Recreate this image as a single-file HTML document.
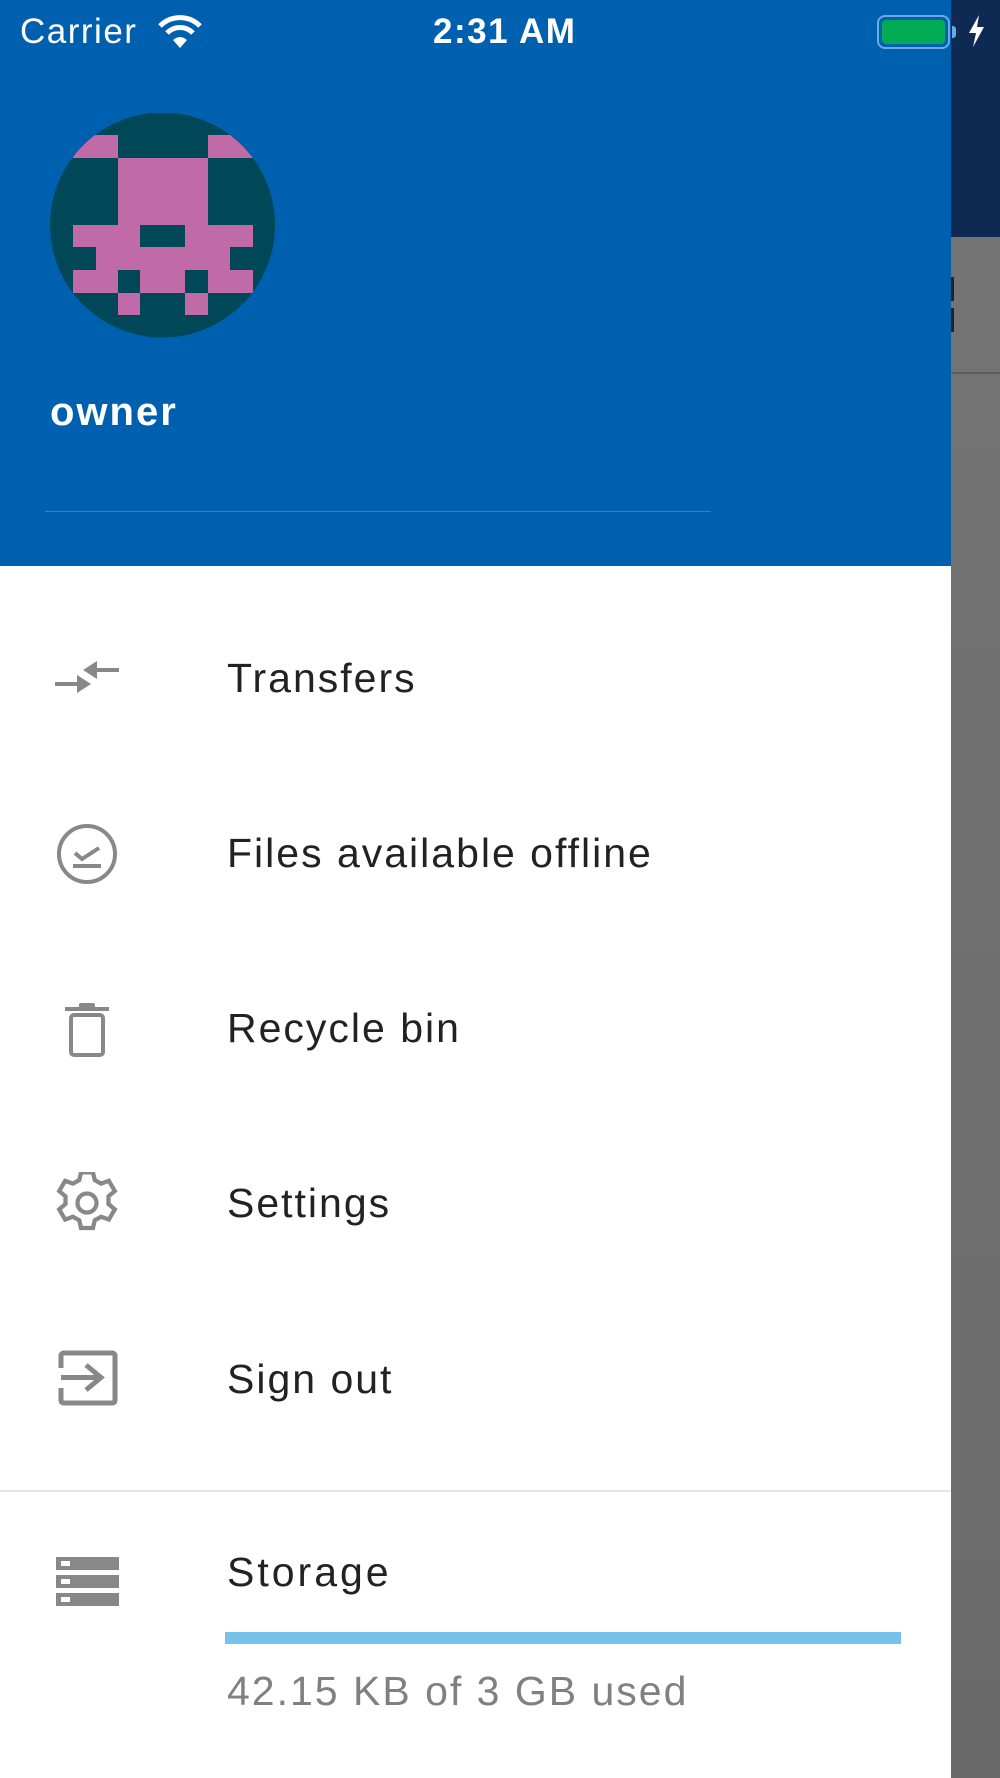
<!DOCTYPE html>
<html><head><meta charset="utf-8"><style>
*{margin:0;padding:0;box-sizing:border-box}
html,body{width:1000px;height:1778px;overflow:hidden;background:#fff;font-family:"Liberation Sans",sans-serif}
.abs{position:absolute}
.item{position:absolute;left:227px;font-size:41px;letter-spacing:2px;color:#222;line-height:1}
</style></head><body>
<div class="abs" style="left:951px;top:0;width:49px;height:237px;background:#0f2a52"></div>
<div class="abs" style="left:951px;top:237px;width:49px;height:1541px;background:linear-gradient(#747474,#6a6a6a)"></div>
<div class="abs" style="left:951px;top:372px;width:49px;height:2px;background:#5d5d5d"></div>
<div class="abs" style="left:951px;top:277px;width:3px;height:24px;background:#222"></div>
<div class="abs" style="left:951px;top:308px;width:3px;height:24px;background:#222"></div>
<div class="abs" style="left:0;top:0;width:951px;height:566px;background:#0060b0"></div>
<div class="abs" style="left:0;top:566px;width:951px;height:1212px;background:#fff"></div>
<!-- status bar -->
<div class="abs" style="left:20px;top:13px;font-size:35px;letter-spacing:1.5px;color:#fff;line-height:38px">Carrier</div>
<svg class="abs" style="left:156px;top:14px" width="48" height="36" viewBox="0 0 48 36">
<path d="M4 12 A28 28 0 0 1 44 12" stroke="#fff" stroke-width="5" fill="none"/>
<path d="M11 19 A18 18 0 0 1 37 19" stroke="#fff" stroke-width="5" fill="none"/>
<path d="M17 26 Q24 20 31 26 L24 34 Z" fill="#fff"/></svg>
<div class="abs" style="left:433px;top:13px;font-size:35px;letter-spacing:1.5px;color:#fff;line-height:38px;font-weight:bold">2:31 AM</div>
<div class="abs" style="left:877px;top:15px;width:73px;height:34px;border:2px solid #6ea9e0;border-radius:8px;padding:3px"><div style="width:100%;height:100%;background:#00ad55;border-radius:4px"></div></div>
<div class="abs" style="left:952px;top:26px;width:4px;height:12px;background:#6ea9e0;border-radius:0 3px 3px 0"></div>
<svg class="abs" style="left:966px;top:14px" width="20" height="34" viewBox="0 0 20 34"><path d="M13 1 L3 19 L10 19 L7 33 L18 13 L11 13 Z" fill="#fff"/></svg>
<!-- avatar -->
<svg class="abs" style="left:50px;top:113px" width="225" height="225" viewBox="50 113 225 225">
<defs><clipPath id="c"><circle cx="162.5" cy="225" r="112.5"/></clipPath></defs>
<g clip-path="url(#c)">
<rect x="50" y="113" width="225" height="225" fill="#004858"/>
<g fill="#c06aa8">
<rect x="73" y="135" width="45" height="23"/><rect x="208" y="135" width="45" height="23"/>
<rect x="118" y="158" width="90" height="67"/>
<rect x="73" y="225" width="67" height="22"/><rect x="185" y="225" width="68" height="22"/>
<rect x="96" y="247" width="134" height="23"/>
<rect x="73" y="270" width="45" height="23"/><rect x="140" y="270" width="45" height="23"/><rect x="208" y="270" width="45" height="23"/>
<rect x="118" y="293" width="22" height="22"/><rect x="185" y="293" width="23" height="22"/>
</g></g></svg>
<div class="abs" style="left:50px;top:390px;font-size:40px;letter-spacing:2px;color:#fff;line-height:44px;font-weight:bold">owner</div>
<div class="abs" style="left:45px;top:511px;width:666px;height:1px;background:#3b7dc0"></div>
<!-- menu -->
<svg class="abs" style="left:55px;top:656px" width="66" height="44" viewBox="0 0 66 44">
<g fill="#888"><rect x="0" y="26" width="28" height="4"/><path d="M22 19 L36 28 L22 37 Z"/>
<rect x="34" y="12" width="30" height="4"/><path d="M42 5 L28 14 L42 23 Z"/></g></svg>
<div class="item" style="top:658px">Transfers</div>
<svg class="abs" style="left:55px;top:822px" width="64" height="64" viewBox="0 0 64 64">
<circle cx="32" cy="32" r="28" stroke="#888" stroke-width="4" fill="none"/>
<path d="M20 31 L27 37 L44 26" stroke="#888" stroke-width="4" fill="none"/>
<rect x="18" y="42" width="28" height="4" fill="#888"/></svg>
<div class="item" style="top:833px">Files available offline</div>
<svg class="abs" style="left:64px;top:1002px" width="46" height="56" viewBox="0 0 46 56">
<rect x="1" y="5" width="44" height="4" fill="#888"/><rect x="15" y="1" width="16" height="6" fill="#888" rx="2"/>
<rect x="7" y="13" width="32" height="40" rx="3" stroke="#888" stroke-width="4" fill="none"/></svg>
<div class="item" style="top:1008px">Recycle bin</div>
<svg class="abs" style="left:56px;top:1172px" width="62" height="62" viewBox="3.2 3.2 17.6 17.6">
<path fill="none" stroke="#888" stroke-width="1.2" d="M10.3 3.3h3.4l.5 2.2 1.8 1 2.2-.8 1.7 2.9-1.8 1.5v2.2l1.8 1.5-1.7 2.9-2.2-.8-1.8 1-.5 2.2h-3.4l-.5-2.2-1.8-1-2.2.8-1.7-2.9 1.8-1.5v-2.2l-1.8-1.5 1.7-2.9 2.2.8 1.8-1z"/>
<circle cx="12" cy="12" r="2.7" fill="none" stroke="#888" stroke-width="1.2"/></svg>
<div class="item" style="top:1183px">Settings</div>
<svg class="abs" style="left:58px;top:1350px" width="60" height="56" viewBox="0 0 60 56">
<path d="M3 18 V6 Q3 3 6 3 H54 Q57 3 57 6 V50 Q57 53 54 53 H6 Q3 53 3 50 V38" stroke="#888" stroke-width="5" fill="none"/>
<rect x="3" y="25" width="36" height="5" fill="#888"/><path d="M28 15 L43 27.5 L28 40" stroke="#888" stroke-width="5" fill="none"/></svg>
<div class="item" style="top:1359px">Sign out</div>
<div class="abs" style="left:0;top:1490px;width:951px;height:2px;background:#e6e6e6"></div>
<svg class="abs" style="left:56px;top:1557px" width="63" height="50" viewBox="0 0 63 50">
<g fill="#888"><rect x="0" y="0" width="63" height="13"/><rect x="0" y="18" width="63" height="13"/><rect x="0" y="36" width="63" height="13"/></g>
<g fill="#fff"><rect x="5" y="4" width="9" height="5"/><rect x="5" y="22" width="9" height="5"/><rect x="5" y="40" width="9" height="5"/></g></svg>
<div class="item" style="top:1552px;letter-spacing:3px">Storage</div>
<div class="abs" style="left:225px;top:1632px;width:676px;height:12px;background:#76c2ea"></div>
<div class="item" style="top:1671px;color:#808080">42.15 KB of 3 GB used</div>
</body></html>
